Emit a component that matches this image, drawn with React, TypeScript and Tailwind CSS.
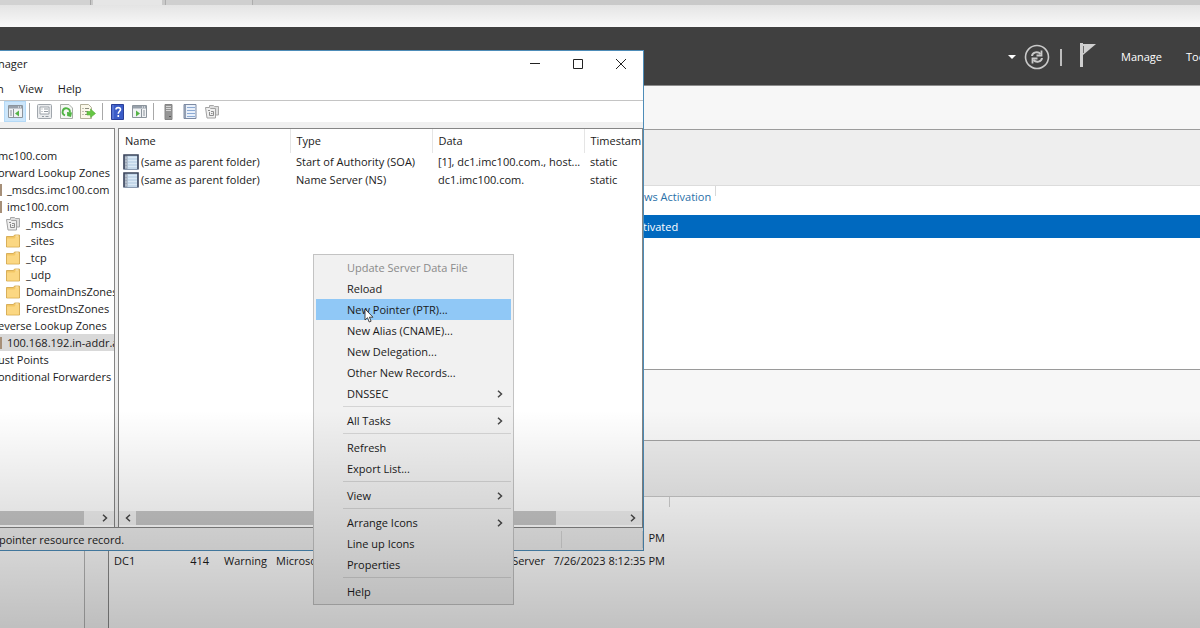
import { useState } from "react";
import clsx from "clsx";

type TreeNode = {
    label: string;
    kind: "root" | "zone" | "folder" | "stub";
};

const treeNodes: TreeNode[] = [
    { label: "mc100.com", kind: "root" },
    { label: "orward Lookup Zones", kind: "root" },
    { label: "_msdcs.imc100.com", kind: "zone" },
    { label: "imc100.com", kind: "zone" },
    { label: "_msdcs", kind: "stub" },
    { label: "_sites", kind: "folder" },
    { label: "_tcp", kind: "folder" },
    { label: "_udp", kind: "folder" },
    { label: "DomainDnsZones", kind: "folder" },
    { label: "ForestDnsZones", kind: "folder" },
    { label: "everse Lookup Zones", kind: "root" },
    { label: "100.168.192.in-addr.a", kind: "zone" },
    { label: "ust Points", kind: "root" },
    { label: "onditional Forwarders", kind: "root" },
];

const records = [
    { name: "(same as parent folder)", type: "Start of Authority (SOA)", data: "[1], dc1.imc100.com., host...", stamp: "static" },
    { name: "(same as parent folder)", type: "Name Server (NS)", data: "dc1.imc100.com.", stamp: "static" },
];

const menuGroups = [
    [
        { label: "Update Server Data File", disabled: true },
        { label: "Reload" },
        { label: "New Pointer (PTR)..." },
        { label: "New Alias (CNAME)..." },
        { label: "New Delegation..." },
        { label: "Other New Records..." },
        { label: "DNSSEC", submenu: true },
    ],
    [{ label: "All Tasks", submenu: true }],
    [{ label: "Refresh" }, { label: "Export List..." }],
    [{ label: "View", submenu: true }],
    [{ label: "Arrange Icons", submenu: true }, { label: "Line up Icons" }, { label: "Properties" }],
    [{ label: "Help" }],
] as { label: string; disabled?: boolean; submenu?: boolean }[][];

/* Icons */

const FolderIcon = () => (
    <svg width="14" height="14" viewBox="0 0 14 14">
        <path d="M.5 2.500h7l1-1.500h5v12H.5z" fill="#f3c765" stroke="#cfa244" strokeWidth="0.800" />
        <path d="M1 4.500h7.500l1-1.500H13v9.500H1z" fill="#fbd782" />
        <path d="M9.500 2h3" stroke="#fdf0cd" />
    </svg>
);

const StubIcon = () => (
    <svg width="14" height="15" viewBox="0 0 14 15">
        <path d="M4.500 3V1.500h4l1 1h4v8.500h-3" fill="#dedede" stroke="#a8a8a8" />
        <path d="M.5 3.500h4l1 1h5v9.500H2z" fill="#efefef" stroke="#a2a2a2" />
        <path d="M3 6.500h2M4.500 8v3.500h4v-4H6M6 9.500h1.500" fill="none" stroke="#8d8d8d" />
    </svg>
);

const ZoneIcon = () => (
    <svg width="16" height="16" viewBox="0 0 16 16">
        <path d="M1 1h14v14H1z" fill="#c4d8ea" />
        <path d="M1.500 1.500h3v13.500h-3z" fill="#9aa5b4" />
        <path d="M5 3.500h9M5 6.500h9M5 9.500h9M5 12.500h9" stroke="#dbe9f5" />
        <path d="M2 4h2M2 7h2M2 10h2M2 13h2" stroke="#c9d1da" />
        <path d="M1 15.500V1h14v14.500" fill="none" stroke="#39435a" strokeWidth="1.600" />
        <path d="M1 15.500h14" stroke="#8a9ab0" />
    </svg>
);

const PaneIcon = ({ flip = false }: { flip?: boolean }) => (
    <svg width="15" height="13" viewBox="0 0 15 13">
        <path d="M.5.500h14v12H.5z" fill="#f0f2f4" stroke="#8c949c" />
        <path d="M1 1h13v2.500H1z" fill="#98a1ab" />
        <path d="M10 2h1M12 2h1" stroke="#fff" />
        {flip ? (
            <>
                <path d="M9.500 4v8.500M11 6h2M11 8h2M11 10h2" stroke="#8c949c" />
                <path d="M4 5.500l4 3-4 3z" fill="#55b346" />
            </>
        ) : (
            <>
                <path d="M5.500 4v8.500M2 6h2M2 8h2M2 10h2" stroke="#8c949c" />
                <path d="M11 5.500l-4 3 4 3z" fill="#55b346" />
            </>
        )}
    </svg>
);

const PropertiesIcon = () => (
    <svg width="15" height="15" viewBox="0 0 15 15">
        <rect x="0.500" y="0.500" width="14" height="14" rx="1" fill="#e9ebed" stroke="#a0a6ac" />
        <path d="M3 3h9v7H3z" fill="#fff" stroke="#9aa1a8" />
        <path d="M4.500 5h1M7 5h4M4.500 7.500h1M7 7.500h4M5 12.500h2M8.500 12.500h3" stroke="#949ba2" />
    </svg>
);

const ReloadIcon = () => (
    <svg width="13" height="15" viewBox="0 0 13 15">
        <path d="M.5.500h8.500l3.500 3.500v10.500H.5z" fill="#f5f7f4" stroke="#a9afa7" />
        <path d="M5 11.300A3.600 3.600 0 1 1 9.800 8.500" fill="none" stroke="#4fb443" strokeWidth="1.900" />
        <path d="M7 8l5 .5-1 4.500-3.800-1z" fill="#4fb443" />
    </svg>
);

const ExportIcon = () => (
    <svg width="16" height="15" viewBox="0 0 16 15">
        <path d="M.5.500h8l3 3v11H.5z" fill="#fbf8ea" stroke="#b3b09a" />
        <path d="M2.500 4.500h1M5 4.500h4M2.500 7.500h1M5 7.500h3M2.500 10.500h1M5 10.500h3" stroke="#8b8c7e" />
        <path d="M7 7.500h3.500V5l5 4.500-5 4V11H7z" fill="#66c644" stroke="#56b038" strokeWidth="0.600" />
    </svg>
);

const HelpIcon = () => (
    <svg width="13" height="16" viewBox="0 0 13 16">
        <path d="M.5.500h12v15H.5z" fill="#3a5cc8" stroke="#2a3f98" />
        <path d="M1 1h2v14H1z" fill="#5574d4" />
        <path d="M5 5.500C5 3 9.500 3 9.500 5.500c0 1.800-2.200 1.800-2.200 4.200M7.300 11v2" fill="none" stroke="#fff" strokeWidth="1.600" />
    </svg>
);

const ServerIcon = () => (
    <svg width="9" height="16" viewBox="0 0 9 16">
        <path d="M1 .5h7v15H1z" fill="#959595" stroke="#858585" />
        <path d="M2 2.500h5M2 4.500h5M2 6.500h5" stroke="#d6d6d6" />
        <path d="M5 12.500h2" stroke="#5a5a5a" />
    </svg>
);

const RecordListIcon = () => (
    <svg width="14" height="15" viewBox="0 0 14 15">
        <path d="M1 .5h12v14H1z" fill="#e9f0fa" stroke="#7c8aa3" />
        <path d="M1 1h2v13H1z" fill="#929eb2" />
        <path d="M4 3.500h8M4 6.500h8M4 9.500h8M4 12.500h8" stroke="#8caad4" />
    </svg>
);

const SyncIcon = () => (
    <svg width="26" height="26" viewBox="0 0 26 26" fill="none" stroke="#c9c9c9">
        <circle cx="13" cy="13" r="11.500" strokeWidth="1.600" />
        <path d="M8 12c.5-4 6-5 8.500-2M18 14c-.5 4-6 5-8.500 2" strokeWidth="2" />
        <path d="M17.500 6.500v5h-5M8.500 19.500v-5h5" strokeWidth="1.800" />
    </svg>
);

const FlagIcon = () => (
    <svg width="16" height="24" viewBox="0 0 16 24">
        <path d="M0 0h3v24H0z" fill="#cfcfcf" />
        <path d="M3 1h13L3 12z" fill="#cfcfcf" />
        <path d="M3.500 3v7" stroke="#6d6d6d" />
    </svg>
);

const Chevron = ({ left = false }: { left?: boolean }) => (
    <svg width="6" height="8" viewBox="0 0 6 8" fill="none" stroke="#484848" strokeWidth="1.500">
        <path d={left ? "M5 .7L1.500 4 5 7.300" : "M1 .7L4.500 4 1 7.300"} />
    </svg>
);

const toolbar = [
    [{ title: "Show or hide tree", icon: <PaneIcon />, active: true }],
    [
        { title: "Properties", icon: <PropertiesIcon /> },
        { title: "Refresh", icon: <ReloadIcon /> },
        { title: "Export list", icon: <ExportIcon /> },
    ],
    [
        { title: "Help", icon: <HelpIcon /> },
        { title: "Show or hide actions", icon: <PaneIcon flip /> },
    ],
    [
        { title: "New server", icon: <ServerIcon /> },
        { title: "New record", icon: <RecordListIcon /> },
        { title: "New zone", icon: <StubIcon /> },
    ],
] as { title: string; icon: React.ReactNode; active?: boolean }[][];

/* Server Manager, behind the DNS window */

const ServerManager = () => (
    <div className="flex min-h-screen flex-col bg-white">
        <div className="flex h-[5px] bg-[#c9c9c9]">
            <div className="w-[91px] border-r border-[#a5a5a5] bg-[#d2d2d2]" />
            <div className="ml-[2px] w-[69px] bg-[#e6e6e6]" />
            <div className="ml-[3px] w-[88px] border-x border-[#adadad] bg-[#cfcfcf]" />
        </div>
        <div className="h-[22px] bg-gradient-to-b from-[#e4e4e4] to-[#f9f9f9]" />

        <header className="flex h-[59px] items-center justify-end overflow-hidden border-b border-[#8c8c8c] bg-[#404040] pt-[2px] text-white">
            <button aria-label="History" className="mr-2">
                <svg width="8" height="4" viewBox="0 0 8 4"><path d="M0 0h8L4 4z" fill="#fff" /></svg>
            </button>
            <button aria-label="Refresh"><SyncIcon /></button>
            <span className="mx-[10px] h-[17px] w-[2px] bg-[#bdbdbd]" />
            <button aria-label="Notifications" className="mb-1 ml-2"><FlagIcon /></button>
            <button className="ml-[25px]">Manage</button>
            <button className="ml-6 w-[14px] text-left">Too</button>
        </header>

        <div className="flex flex-1">
            <div className="w-[85px] border-r border-[#b5b5b5] bg-[#fcfcfc]" />
            <div className="w-[23px] bg-[#fafafa]" />
            <main className="flex flex-1 flex-col border-l border-[#8a8a8a]">
                <div className="h-[43px] bg-[#f7f7f7]" />
                <div className="h-[57px] border-y border-t-[#9c9c9c] border-b-[#dcdcdc] bg-[#eeeeee]" />
                <div className="h-[29px] pl-[535px]">
                    <a href="#activation" className="inline-block h-[10px] border-r border-[#d8d8d8] pr-1 leading-[22px] text-[#2a70a8]">
                        ws Activation
                    </a>
                </div>
                <div className="h-[23px] bg-[#0069bf] pl-[534px] leading-[23px] text-white">tivated</div>
                <div className="h-[131px]" />
                <div className="h-[71px] border-t border-[#9a9a9a] bg-[#f7f7f7]" />
                <div className="h-[57px] border-y border-t-[#a0a0a0] border-b-[#c6c6c6] bg-[#ebebeb]" />
                <div className="ml-[559px] h-[10px] w-[2px] border-r border-[#cfcfcf]" />
                <table className="mt-[19px] w-[556px] table-fixed leading-[23px] whitespace-nowrap">
                    <colgroup>
                        <col className="w-[66px]" />
                        <col className="w-[34px]" />
                        <col className="w-[66px]" />
                        <col className="w-[150px]" />
                        <col className="w-[120px]" />
                        <col />
                    </colgroup>
                    <tbody>
                        <tr>
                            <td colSpan={6} className="text-right">PM</td>
                        </tr>
                        <tr>
                            <td className="pl-[5px]">DC1</td>
                            <td className="text-right">414</td>
                            <td className="pl-[15px]">Warning</td>
                            <td className="pl-[1px]">Microso</td>
                            <td className="text-right">Server</td>
                            <td className="text-right">7/26/2023 8:12:35 PM</td>
                        </tr>
                    </tbody>
                </table>
            </main>
        </div>
    </div>
);

const Tree = () => {
    const [selected, setSelected] = useState("100.168.192.in-addr.a");

    return (
        <nav className="flex w-[115px] flex-col overflow-hidden border-t border-r border-[#858585] bg-white">
            <ul className="flex-1 pt-[18px]">
                {treeNodes.map((node) => (
                    <li key={node.label}>
                        <button
                            onClick={() => setSelected(node.label)}
                            className={clsx(
                                "flex h-[17px] w-full items-center whitespace-nowrap",
                                selected === node.label && "bg-[#d9d9d9]"
                            )}
                        >
                            {node.kind === "zone" && <span className="mr-[5px] h-3 w-[2px] shrink-0 bg-[#a68f78]" />}
                            {node.kind === "folder" && <span className="mr-[6px] ml-[6px] shrink-0"><FolderIcon /></span>}
                            {node.kind === "stub" && <span className="mr-[6px] ml-[6px] shrink-0"><StubIcon /></span>}
                            <span className={clsx(node.kind === "root" && "-ml-[2px]")}>{node.label}</span>
                        </button>
                    </li>
                ))}
            </ul>
            <div className="mb-[2px] flex h-[14px] items-center bg-[#f0f0f0]">
                <div className="h-full w-[84px] bg-[#c6c6c6]" />
                <button aria-label="Scroll right" className="ml-[18px]"><Chevron /></button>
            </div>
        </nav>
    );
};

const RecordList = () => (
    <section className="ml-[3px] flex min-w-0 flex-1 flex-col border border-b-0 border-[#858585] bg-white">
        <div className="flex-1 overflow-hidden">
            <table className="w-full table-fixed text-left whitespace-nowrap">
                <thead>
                    <tr className="h-6">
                        <th className="w-[171px] border-r border-[#e5e5e5] pl-[6px] font-normal">Name</th>
                        <th className="w-[142px] border-r border-[#e5e5e5] pl-[6px] font-normal">Type</th>
                        <th className="w-[152px] border-r border-[#e5e5e5] pl-[6px] font-normal">Data</th>
                        <th className="pl-[6px] font-normal">Timestam</th>
                    </tr>
                </thead>
                <tbody>
                    {records.map((record) => (
                        <tr key={record.type} className="h-[18px]">
                            <td className="pl-1">
                                <span className="flex items-center gap-[2px]"><ZoneIcon />{record.name}</span>
                            </td>
                            <td className="pl-[6px]">{record.type}</td>
                            <td className="pl-[6px]">{record.data}</td>
                            <td className="pl-[6px]">{record.stamp}</td>
                        </tr>
                    ))}
                </tbody>
            </table>
        </div>
        <div className="mb-[2px] flex h-[14px] items-center bg-[#f0f0f0]">
            <button aria-label="Scroll left" className="flex w-[17px] justify-center"><Chevron left /></button>
            <div className="h-full w-[420px] bg-[#c6c6c6]" />
            <button aria-label="Scroll right" className="mr-[6px] ml-auto"><Chevron /></button>
        </div>
    </section>
);

const DnsWindow = () => (
    <div className="absolute top-[50px] left-0 flex h-[501px] w-[644px] flex-col border border-l-0 border-[#4d8cb8] bg-[#f0f0f0]">
        <div className="flex h-[26px] items-center bg-white pr-px">
            <span className="-ml-[2px] flex-1">nager</span>
            <button aria-label="Minimize" className="flex w-[43px] justify-center">
                <svg width="10" height="10" stroke="#222"><path d="M0 4.500h10" /></svg>
            </button>
            <button aria-label="Maximize" className="flex w-[43px] justify-center">
                <svg width="10" height="10" stroke="#222" fill="none"><path d="M.5.500h9v9h-9z" /></svg>
            </button>
            <button aria-label="Close" className="flex w-[43px] justify-center">
                <svg width="10" height="10" stroke="#222"><path d="M0 0l10 10M10 0L0 10" /></svg>
            </button>
        </div>
        <div className="flex h-6 items-center gap-[15px] border-b border-[#c4c4c4] bg-white">
            <button className="-ml-[3px]">n</button>
            <button>View</button>
            <button>Help</button>
        </div>
        <div className="flex h-[21px] items-center bg-white pl-1">
            {toolbar.map((group, i) => (
                <div key={i} className="flex items-center">
                    {i > 0 && <span className="mx-[3px] h-[17px] w-px bg-[#a8a8a8]" />}
                    {group.map((tool) => (
                        <button
                            key={tool.title}
                            aria-label={tool.title}
                            className={clsx(
                                "flex h-[21px] w-[22px] items-center justify-center",
                                tool.active && "border border-[#b4d9f6] bg-[#cce6fb]"
                            )}
                        >
                            {tool.icon}
                        </button>
                    ))}
                </div>
            ))}
        </div>
        <div className="mt-[6px] flex min-h-0 flex-1 border-b border-[#858585]">
            <Tree />
            <RecordList />
        </div>
        <footer className="flex h-[22px] items-center bg-[#ececec] pt-px">
            <span className="-ml-px flex-1">pointer resource record.</span>
            <span className="h-[17px] w-[82px] border-x border-[#d2d2d2]" />
        </footer>
    </div>
);

const ContextMenu = () => {
    const [active, setActive] = useState("New Pointer (PTR)...");

    return (
        <div role="menu" className="absolute top-[254px] left-[313px] w-[201px] border border-[#c3c3c3] bg-[#f1f1f1] p-[2px]">
            {menuGroups.map((group, i) => (
                <div key={i}>
                    {i > 0 && <div className="mt-[2px] mb-[3px] ml-[27px] h-px bg-[#d4d4d4]" />}
                    {group.map((item) => (
                        <button
                            key={item.label}
                            role="menuitem"
                            disabled={item.disabled}
                            onMouseEnter={() => setActive(item.label)}
                            className={clsx(
                                "flex h-[21px] w-full items-center justify-between pr-2 pl-[31px]",
                                item.disabled && "text-[#8a8a8a]",
                                active === item.label && "bg-[#90c8f6]"
                            )}
                        >
                            {item.label}
                            {item.submenu && <Chevron />}
                        </button>
                    ))}
                </div>
            ))}
        </div>
    );
};

const App = () => (
    <div className="relative min-h-screen overflow-hidden font-['Open_Sans','Noto_Sans',sans-serif] text-[11px] leading-4 text-[#1a1a1a]">
        <ServerManager />
        <DnsWindow />
        <ContextMenu />

        {/* Mouse pointer */}
        <svg className="pointer-events-none absolute top-[308px] left-[364px]" width="10" height="15" viewBox="0 0 10 15">
            <path d="M1 1v11l2.500-2.300L5.200 14l1.900-.8-1.700-4H9z" fill="#fff" stroke="#333" strokeWidth="0.900" />
        </svg>

        {/* Shade over the lower part of the screen */}
        <div className="pointer-events-none absolute inset-x-0 bottom-0 h-[218px] bg-gradient-to-b from-black/0 to-black/24" />
    </div>
);

export default App;
